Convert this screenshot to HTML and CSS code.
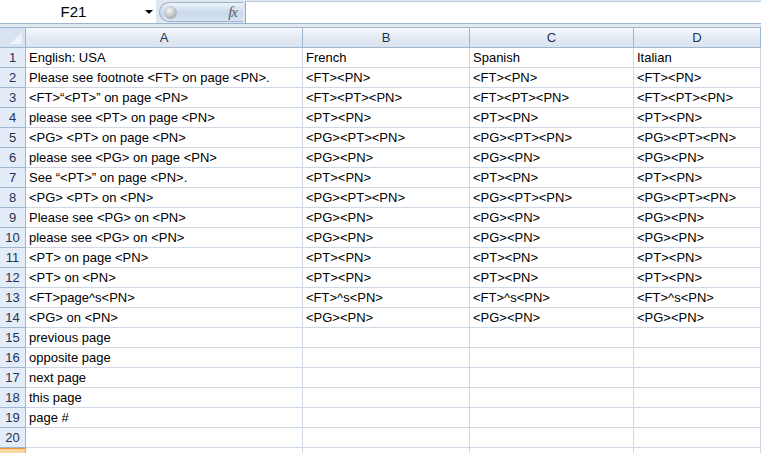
FILE: index.html
```html
<!DOCTYPE html>
<html>
<head>
<meta charset="utf-8">
<link rel="stylesheet" href="styles.css">
</head>
<body>
<div class="app">
  <div class="formula-bar">
    <div class="name-box"><span class="name">F21</span><span class="caret"></span></div>
    <div class="fx-pill"><span class="knob"></span><span class="fx">fx</span></div>
    <div class="formula-input"></div>
  </div>
  <div class="band"></div>
  <div class="sheet">
    <div class="corner"></div><div class="col-h">A</div><div class="col-h">B</div><div class="col-h">C</div><div class="col-h">D</div><div class="col-h col-rest"></div>

    <div class="row-h">1</div><div class="cell">English: USA</div><div class="cell">French</div><div class="cell">Spanish</div><div class="cell">Italian</div><div class="cell"></div>
    <div class="row-h">2</div><div class="cell">Please see footnote &lt;FT&gt; on page &lt;PN&gt;.</div><div class="cell">&lt;FT&gt;&lt;PN&gt;</div><div class="cell">&lt;FT&gt;&lt;PN&gt;</div><div class="cell">&lt;FT&gt;&lt;PN&gt;</div><div class="cell"></div>
    <div class="row-h">3</div><div class="cell">&lt;FT&gt;“&lt;PT&gt;” on page &lt;PN&gt;</div><div class="cell">&lt;FT&gt;&lt;PT&gt;&lt;PN&gt;</div><div class="cell">&lt;FT&gt;&lt;PT&gt;&lt;PN&gt;</div><div class="cell">&lt;FT&gt;&lt;PT&gt;&lt;PN&gt;</div><div class="cell"></div>
    <div class="row-h">4</div><div class="cell">please see &lt;PT&gt; on page &lt;PN&gt;</div><div class="cell">&lt;PT&gt;&lt;PN&gt;</div><div class="cell">&lt;PT&gt;&lt;PN&gt;</div><div class="cell">&lt;PT&gt;&lt;PN&gt;</div><div class="cell"></div>
    <div class="row-h">5</div><div class="cell">&lt;PG&gt; &lt;PT&gt; on page &lt;PN&gt;</div><div class="cell">&lt;PG&gt;&lt;PT&gt;&lt;PN&gt;</div><div class="cell">&lt;PG&gt;&lt;PT&gt;&lt;PN&gt;</div><div class="cell">&lt;PG&gt;&lt;PT&gt;&lt;PN&gt;</div><div class="cell"></div>
    <div class="row-h">6</div><div class="cell">please see &lt;PG&gt; on page &lt;PN&gt;</div><div class="cell">&lt;PG&gt;&lt;PN&gt;</div><div class="cell">&lt;PG&gt;&lt;PN&gt;</div><div class="cell">&lt;PG&gt;&lt;PN&gt;</div><div class="cell"></div>
    <div class="row-h">7</div><div class="cell">See “&lt;PT&gt;” on page &lt;PN&gt;.</div><div class="cell">&lt;PT&gt;&lt;PN&gt;</div><div class="cell">&lt;PT&gt;&lt;PN&gt;</div><div class="cell">&lt;PT&gt;&lt;PN&gt;</div><div class="cell"></div>
    <div class="row-h">8</div><div class="cell">&lt;PG&gt; &lt;PT&gt; on &lt;PN&gt;</div><div class="cell">&lt;PG&gt;&lt;PT&gt;&lt;PN&gt;</div><div class="cell">&lt;PG&gt;&lt;PT&gt;&lt;PN&gt;</div><div class="cell">&lt;PG&gt;&lt;PT&gt;&lt;PN&gt;</div><div class="cell"></div>
    <div class="row-h">9</div><div class="cell">Please see &lt;PG&gt; on &lt;PN&gt;</div><div class="cell">&lt;PG&gt;&lt;PN&gt;</div><div class="cell">&lt;PG&gt;&lt;PN&gt;</div><div class="cell">&lt;PG&gt;&lt;PN&gt;</div><div class="cell"></div>
    <div class="row-h">10</div><div class="cell">please see &lt;PG&gt; on &lt;PN&gt;</div><div class="cell">&lt;PG&gt;&lt;PN&gt;</div><div class="cell">&lt;PG&gt;&lt;PN&gt;</div><div class="cell">&lt;PG&gt;&lt;PN&gt;</div><div class="cell"></div>
    <div class="row-h">11</div><div class="cell">&lt;PT&gt; on page &lt;PN&gt;</div><div class="cell">&lt;PT&gt;&lt;PN&gt;</div><div class="cell">&lt;PT&gt;&lt;PN&gt;</div><div class="cell">&lt;PT&gt;&lt;PN&gt;</div><div class="cell"></div>
    <div class="row-h">12</div><div class="cell">&lt;PT&gt; on &lt;PN&gt;</div><div class="cell">&lt;PT&gt;&lt;PN&gt;</div><div class="cell">&lt;PT&gt;&lt;PN&gt;</div><div class="cell">&lt;PT&gt;&lt;PN&gt;</div><div class="cell"></div>
    <div class="row-h">13</div><div class="cell">&lt;FT&gt;page^s&lt;PN&gt;</div><div class="cell">&lt;FT&gt;^s&lt;PN&gt;</div><div class="cell">&lt;FT&gt;^s&lt;PN&gt;</div><div class="cell">&lt;FT&gt;^s&lt;PN&gt;</div><div class="cell"></div>
    <div class="row-h">14</div><div class="cell">&lt;PG&gt; on &lt;PN&gt;</div><div class="cell">&lt;PG&gt;&lt;PN&gt;</div><div class="cell">&lt;PG&gt;&lt;PN&gt;</div><div class="cell">&lt;PG&gt;&lt;PN&gt;</div><div class="cell"></div>
    <div class="row-h">15</div><div class="cell">previous page</div><div class="cell"></div><div class="cell"></div><div class="cell"></div><div class="cell"></div>
    <div class="row-h">16</div><div class="cell">opposite page</div><div class="cell"></div><div class="cell"></div><div class="cell"></div><div class="cell"></div>
    <div class="row-h">17</div><div class="cell">next page</div><div class="cell"></div><div class="cell"></div><div class="cell"></div><div class="cell"></div>
    <div class="row-h">18</div><div class="cell">this page</div><div class="cell"></div><div class="cell"></div><div class="cell"></div><div class="cell"></div>
    <div class="row-h">19</div><div class="cell">page #</div><div class="cell"></div><div class="cell"></div><div class="cell"></div><div class="cell"></div>
    <div class="row-h">20</div><div class="cell"></div><div class="cell"></div><div class="cell"></div><div class="cell"></div><div class="cell"></div>
    <div class="row-h row-sel"></div><div class="cell"></div><div class="cell"></div><div class="cell"></div><div class="cell"></div><div class="cell"></div>
  </div>
</div>
</body>
</html>
```
FILE: styles.css
```css
html, body {
  margin: 0;
  padding: 0;
  background: #ffffff;
  overflow: hidden;
}
.app {
  width: 761px;
  height: 453px;
  overflow: hidden;
  font-family: "Liberation Sans", Arial, sans-serif;
}
.formula-bar {
  height: 23px;
  display: flex;
  align-items: stretch;
  background: #dfe7f1;
  border-bottom: 1px solid #9fb4cd;
}
.name-box {
  width: 156px;
  background: #ffffff;
  display: flex;
  align-items: center;
}
.name {
  flex: 1;
  text-align: center;
  font-size: 15px;
  color: #000;
  padding-left: 2px;
}
.caret {
  width: 0;
  height: 0;
  border-left: 4px solid transparent;
  border-right: 4px solid transparent;
  border-top: 4px solid #000;
  margin-right: 3px;
}
.fx-pill {
  margin: 2px 0 1px 3px;
  width: 84px;
  border-radius: 11px 0 0 11px;
  background: linear-gradient(#eef3fa, #c9d8ec 55%, #d9e4f3);
  border: 1px solid #9db2cc;
  border-right: none;
  display: flex;
  align-items: center;
  justify-content: space-between;
  box-sizing: border-box;
  padding: 0 6px 0 4px;
}
.knob {
  width: 13px;
  height: 13px;
  border-radius: 50%;
  background: radial-gradient(circle at 40% 35%, #f6f6f6, #b0b4ba 65%, #8d9299);
}
.fx {
  font-family: "Liberation Serif", serif;
  font-style: italic;
  font-size: 15px;
  color: #5e5e5e;
  letter-spacing: -1px;
}
.formula-input {
  flex: 1;
  margin: 1px 0 0 2px;
  background: #ffffff;
  border-left: 1px solid #8fa7c4;
  border-top: 1px solid #b9c9dd;
}
.band {
  height: 3px;
  background: #e3e9f1;
}
.sheet {
  display: grid;
  grid-template-columns: 26px 277px 167px 164px 127px 1fr;
  grid-auto-rows: 20px;
  border-top: 1px solid #9eb6ce;
}
.sheet > div {
  box-sizing: border-box;
  white-space: nowrap;
}
.corner {
  background: #d7e3f2;
  border-right: 1px solid #9eb6ce;
  border-bottom: 1px solid #9eb6ce;
  position: relative;
}
.corner::after {
  content: "";
  position: absolute;
  right: 3px;
  bottom: 3px;
  width: 0;
  height: 0;
  border-left: 12px solid transparent;
  border-bottom: 12px solid #eef3fa;
}
.col-h {
  background: linear-gradient(#f6f8fc, #e4eaf4 50%, #dbe3ef);
  border-right: 1px solid #9eb6ce;
  border-bottom: 1px solid #9eb6ce;
  text-align: center;
  font-size: 13px;
  line-height: 19px;
  color: #1f3353;
}
.col-rest {
  border-right: none;
}
.row-h {
  background: #e4ecf7;
  border-right: 1px solid #9eb6ce;
  border-bottom: 1px solid #9eb6ce;
  text-align: center;
  font-size: 13px;
  line-height: 19px;
  color: #1f3353;
}
.row-sel {
  background: #f9d99f;
  border-top: 1px solid #f29536;
}
.cell {
  border-right: 1px solid #d0d7e5;
  border-bottom: 1px solid #d0d7e5;
  font-size: 13px;
  line-height: 19px;
  padding-left: 3px;
  color: #000;
}
```
